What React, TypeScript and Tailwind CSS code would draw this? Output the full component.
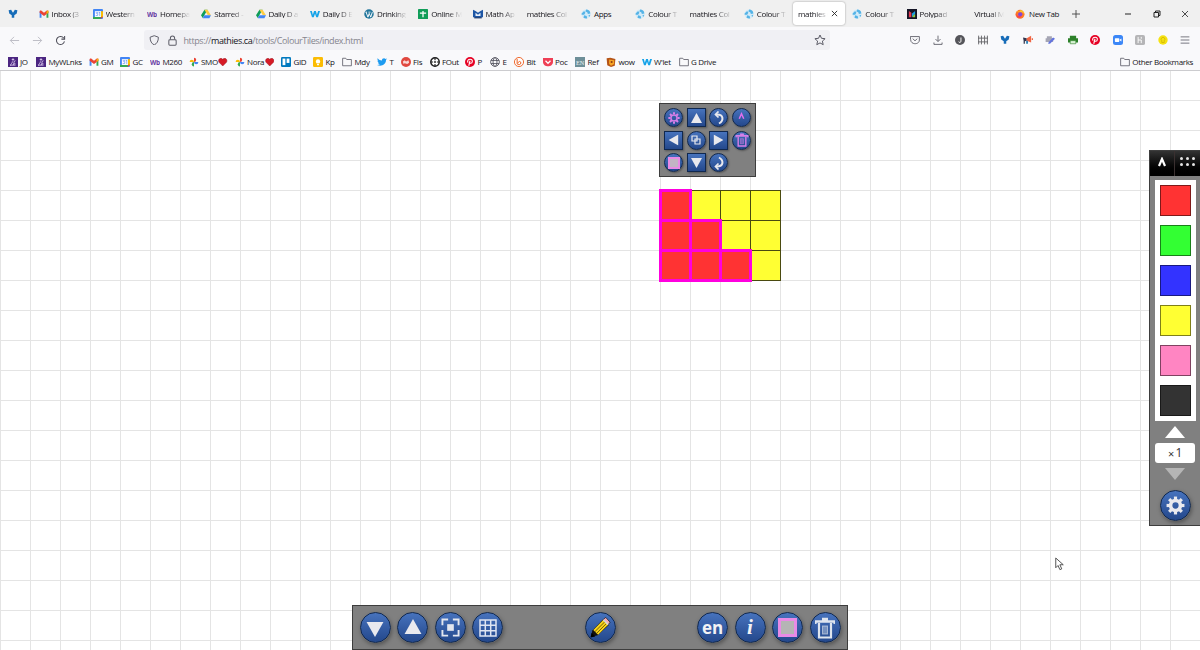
import type { ReactNode } from "react";
import clsx from "clsx";

type IconName = keyof typeof ICONS;

const GLOBE = (
  <>
    <circle cx="8" cy="8" r="7.300" fill="#d3ebf8" />
    <path d="M8 1a7 7 0 0 1 7 6l-4 1-1-3-3-1zM1 7l4-4 2 3-2 3H1zM4 14l1-4 4 1 1 4a7 7 0 0 1-6-1zM12 10l3-1-2 4z" fill="#55b3e6" />
  </>
);

const ICONS = {
  molar: <path d="M1 2 L5 1 L8 6 L11 1 L15 2 L14 7 L10 10 V14 H6 V10 L2 7Z" fill="#176cb8" />,
  gmail: (
    <>
      <path d="M1 4v10h3V7z" fill="#4285f4" />
      <path d="M15 4v10h-3V7z" fill="#34a853" />
      <path d="M1 3l2-1 5 4 5-4 2 1v3l-7 5-7-5z" fill="#ea4335" />
      <path d="M12 4l3-2v4l-3 2z" fill="#fbbc04" />
    </>
  ),
  calendar: (
    <>
      <rect x="0" y="0" width="16" height="16" rx="1.500" fill="#4285f4" />
      <path d="M12.500 3.500H16V13h-3.500z" fill="#fbbc04" />
      <path d="M0 12.500h12.500V16H0z" fill="#34a853" />
      <path d="M12.500 12.500H16L12.500 16z" fill="#ea4335" />
      <rect x="3" y="3.500" width="9.800" height="9.200" fill="#fff" />
      <text x="8" y="11" fontSize="8" fontFamily="Open Sans, sans-serif" fontWeight="600" textAnchor="middle" fill="#4285f4">31</text>
    </>
  ),
  western: (
    <text x="8" y="12" fontSize="11" fontFamily="Open Sans, sans-serif" fontWeight="700" textAnchor="middle" fill="#6a3fa5" textLength="16" lengthAdjust="spacingAndGlyphs">Wb</text>
  ),
  drive: (
    <>
      <path d="M5.500 1h5L5.300 10 2.800 14.500 0 10z" fill="#0f9d58" />
      <path d="M5.500 1h5L16 10h-5z" fill="#ffcd40" />
      <path d="M5.300 10H16l-2.600 4.700H2.800z" fill="#4285f4" />
    </>
  ),
  wallet: <path d="M0 3h3l1.500 6L6.500 3h3l1.500 6L13 3h3l-3.200 10H10L8 7.500 6 13H3.200z" fill="#16a3e8" />,
  wordpress: (
    <>
      <circle cx="8" cy="8" r="7.600" fill="#21759b" />
      <path d="M2.500 5h2.500M7 5h3.500" stroke="#fff" strokeWidth="1.300" />
      <path d="M3.300 5l3 8 2-6 2.500 6 2.500-8" fill="none" stroke="#fff" strokeWidth="1.500" />
    </>
  ),
  sheets: (
    <>
      <rect width="16" height="16" rx="1" fill="#109d58" />
      <path d="M8 3v10M3 6.500h10" stroke="#fff" strokeWidth="2" />
    </>
  ),
  mathapp: (
    <>
      <path d="M0 1l4 2 4 3 4-3 4-2v12H0z" fill="#1d56a5" />
      <path d="M4 6l4 3 4-3v5H4z" fill="#e5eefa" />
      <path d="M2 13h12v2H2z" fill="#12356e" />
    </>
  ),
  globe: GLOBE,
  polypad: (
    <>
      <rect width="16" height="16" fill="#151525" />
      <path d="M3 3l4 3v7H3z" fill="#e33b54" />
      <path d="M8 7l5-4v5l-5 5z" fill="#1d9fe0" />
      <path d="M9 11l4-3v5H9z" fill="#8fca40" />
    </>
  ),
  firefox: (
    <>
      <circle cx="8" cy="8.500" r="7.200" fill="#ff7a25" />
      <path d="M2 3l3 2 3-1 1-3c3 1 6 4 6 7-2-2-3-3-5-3z" fill="#ffc72c" />
      <circle cx="8.300" cy="8.500" r="3.400" fill="#8048d8" />
      <path d="M1.500 6c1 5 4 7 9 5-2 5-9 4-9-5z" fill="#f7375c" />
    </>
  ),
  crest: (
    <>
      <rect width="16" height="16" fill="#4b2581" />
      <path d="M8 2v4M6 4h4M4 14c0-4 3-3 3-7M12 6c-4 0-1 4-4 7M4 13h8M9 11h3" stroke="#e3d5f4" strokeWidth="1.300" fill="none" />
    </>
  ),
  pinwheel: (
    <>
      <path d="M8 8V1a3.500 3.500 0 0 1 0 7z" fill="#ea4335" />
      <path d="M8 8h7a3.500 3.500 0 0 1-7 0z" fill="#4285f4" />
      <path d="M8 8v7a3.500 3.500 0 0 1 0-7z" fill="#34a853" />
      <path d="M8 8H1a3.500 3.500 0 0 1 7 0z" fill="#fbbc04" />
    </>
  ),
  trello: (
    <>
      <rect width="16" height="16" rx="2" fill="#0079bf" />
      <rect x="2.500" y="2.500" width="4.500" height="10.500" fill="#fff" />
      <rect x="9" y="2.500" width="4.500" height="7" fill="#fff" />
    </>
  ),
  keep: (
    <>
      <rect width="16" height="16" rx="2" fill="#fbbc04" />
      <circle cx="8" cy="7" r="3.500" fill="#fff" />
      <path d="M6.500 11h3v2h-3z" fill="#fff" />
    </>
  ),
  folder: <path d="M1 14V2h5l1.500 2H15v10z" fill="none" stroke="#5b5b66" strokeWidth="1.300" strokeLinejoin="round" />,
  twitter: <path d="M1 2c2 2.500 4 3.500 7 3.700C7.500 2 12 .8 13.500 3L16 2.300l-1.600 2.500C14.500 12 7 16 0 12.700c2 0 3.500-.4 4.600-1.300C3 11 2 10 1.500 9H3C1.500 8 .7 6.700.7 5.500l1.300.4C.7 4.700.4 3.300 1 2z" fill="#1d9bf0" />,
  flipgrid: (
    <>
      <circle cx="8" cy="8" r="8" fill="#e0483f" />
      <path d="M3 7l3-2 2 2 4-2 1 4-3 2-4-1-2 1z" fill="#f9d7d4" />
    </>
  ),
  wheel: (
    <>
      <circle cx="8" cy="8" r="6.700" fill="#fff" stroke="#222" strokeWidth="2.400" />
      <path d="M8 1v4M8 11v4M1 8h4M11 8h4" stroke="#222" strokeWidth="1.800" />
      <circle cx="8" cy="8" r="1.500" fill="#222" />
    </>
  ),
  pinterest: (
    <>
      <circle cx="8" cy="8" r="8" fill="#e60023" />
      <path d="M6 14l2-8M5 9C3 6 5 3.500 8.300 3.500c5 0 4 6.500.7 6.500-1 0-1.500-.5-1.700-1" stroke="#fff" strokeWidth="1.700" fill="none" />
    </>
  ),
  web: (
    <g fill="none" stroke="#4a4a55" strokeWidth="1.300">
      <circle cx="8" cy="8" r="7" />
      <ellipse cx="8" cy="8" rx="3.200" ry="7" />
      <path d="M1.500 5.500h13M1.500 10.500h13" />
    </g>
  ),
  bitly: (
    <>
      <circle cx="8" cy="8" r="7.300" fill="#fff" stroke="#ee6123" strokeWidth="1.500" />
      <path d="M5 3v8c2 2 6 1.500 6-1.500S7 6 6.500 10" stroke="#ee6123" strokeWidth="1.600" fill="none" />
    </>
  ),
  pocketRed: (
    <>
      <path d="M0 1.500h16V8c0 9-16 9-16 0z" fill="#ef4056" />
      <path d="M4 6l4 4 4-4" stroke="#fff" strokeWidth="2" fill="none" />
    </>
  ),
  ref: (
    <>
      <rect width="16" height="16" fill="#6e8f98" />
      <text x="8" y="12" fontSize="10" fontFamily="Liberation Serif, serif" textAnchor="middle" fill="#e9f2f4">EN</text>
    </>
  ),
  wow: (
    <>
      <path d="M1 2l6-1 8 2-1 11-6 2-6-3z" fill="#b55316" />
      <path d="M5 4l8 1v6l-5 3-3-3z" fill="#f6a524" />
      <circle cx="9" cy="8" r="1.700" fill="#8f3a10" />
    </>
  ),
  pocket: (
    <g fill="none" stroke="#5b5b66" strokeWidth="1.400" strokeLinecap="round">
      <path d="M1 2.500h14V8c0 8-14 8-14 0z" strokeLinejoin="round" />
      <path d="M4.800 6.300L8 9.300l3.200-3" />
    </g>
  ),
  download: <path d="M8 1v9M4 6.500L8 10.500l4-4M1.500 12v3h13v-3" fill="none" stroke="#5b5b66" strokeWidth="1.400" />,
  avatar: (
    <>
      <circle cx="8" cy="8" r="8" fill="#55555a" />
      <path d="M9.500 4v6c0 2.500-3.500 2.500-3.500.5" stroke="#fff" strokeWidth="1.500" fill="none" />
    </>
  ),
  fence: <path d="M1 1v14M5.500 1v14M10.500 1v14M15 1v14M0 5h16M0 11h16" stroke="#66666b" strokeWidth="1.500" />,
  horn: (
    <>
      <path d="M0 4l6 1v4l-3 1v4H1V9z" fill="#33364d" />
      <path d="M6 5l7-4v11L6 9zM14 5h2v3h-2z" fill="#f06543" />
      <path d="M5 9h3v5H5z" fill="#3182b5" />
    </>
  ),
  printPen: (
    <>
      <path d="M3 2h8v3H3zM1 5h12v6H1z" fill="#a5a5b4" />
      <path d="M5 14l1-3 7-7 3 2-8 8z" fill="#6374df" />
    </>
  ),
  printer: (
    <>
      <path d="M3 1h10v4H3zM0 5h16v7H0z" fill="#2d812a" />
      <path d="M3.500 9h9v5h-9z" fill="#d9f2d5" stroke="#2d812a" />
    </>
  ),
  zoom: (
    <>
      <rect width="16" height="16" rx="4" fill="#3c87f7" />
      <rect x="3" y="5" width="7" height="6" rx="1" fill="#fff" />
      <path d="M10.500 7.500L13.500 5.500v5l-3-2z" fill="#fff" />
    </>
  ),
  grayBadge: (
    <>
      <rect width="16" height="16" rx="3" fill="#b5b5b7" />
      <path d="M5 3v10M5 8h5v5M10 3v3" stroke="#fff" strokeWidth="1.500" fill="none" />
    </>
  ),
  bulb: (
    <>
      <circle cx="8" cy="8" r="7.500" fill="#f5e211" />
      <path d="M6 9a3 3 0 1 1 4 0v3H6z" fill="none" stroke="#c9a800" />
    </>
  ),
  menu: <path d="M1 3h14M1 8h14M1 13h14" stroke="#5b5b66" strokeWidth="1.300" />,
};

function Icon({ name, className = "size-[10px]" }: { name: IconName; className?: string }) {
  return (
    <svg viewBox="0 0 16 16" className={clsx("shrink-0", className)}>
      {ICONS[name]}
    </svg>
  );
}

const TABS: { label: string; icon?: IconName; blank?: boolean; active?: boolean }[] = [
  { label: "Inbox (3", icon: "gmail" },
  { label: "Western", icon: "calendar" },
  { label: "Homepa", icon: "western" },
  { label: "Starred -", icon: "drive" },
  { label: "Daily D a", icon: "drive" },
  { label: "Daily D E", icon: "wallet" },
  { label: "Drinking", icon: "wordpress" },
  { label: "Online M", icon: "sheets" },
  { label: "Math Ap", icon: "mathapp" },
  { label: "mathies Col" },
  { label: "Apps", icon: "globe" },
  { label: "Colour T", icon: "globe" },
  { label: "mathies Col" },
  { label: "Colour T", icon: "globe" },
  { label: "mathies C", active: true },
  { label: "Colour T", icon: "globe" },
  { label: "Polypad", icon: "polypad" },
  { label: "Virtual M", blank: true },
];

const BOOKMARKS: { label: string; icon: IconName; width: string; heart?: boolean }[] = [
  { label: "JO", icon: "crest", width: "w-[28.5px]" },
  { label: "MyWLnks", icon: "crest", width: "w-[52.5px]" },
  { label: "GM", icon: "gmail", width: "w-[31.5px]" },
  { label: "GC", icon: "calendar", width: "w-[30px]" },
  { label: "M260", icon: "western", width: "w-[38.5px]" },
  { label: "SMO", icon: "pinwheel", width: "w-[46px]", heart: true },
  { label: "Nora", icon: "pinwheel", width: "w-[46.5px]", heart: true },
  { label: "GID", icon: "trello", width: "w-[32px]" },
  { label: "Kp", icon: "keep", width: "w-[29px]" },
  { label: "Mdy", icon: "folder", width: "w-[35px]" },
  { label: "T", icon: "twitter", width: "w-[23.5px]" },
  { label: "FIs", icon: "flipgrid", width: "w-[29px]" },
  { label: "FOut", icon: "wheel", width: "w-[35.5px]" },
  { label: "P", icon: "pinterest", width: "w-[25px]" },
  { label: "E", icon: "web", width: "w-[24px]" },
  { label: "Bit", icon: "bitly", width: "w-[28.5px]" },
  { label: "Poc", icon: "pocketRed", width: "w-[32.5px]" },
  { label: "Ref", icon: "ref", width: "w-[31px]" },
  { label: "wow", icon: "wow", width: "w-[35.5px]" },
  { label: "W'let", icon: "wallet", width: "w-[37px]" },
  { label: "G Drive", icon: "folder", width: "w-[50px]" },
];

const EXTENSIONS: IconName[] = [
  "pocket", "download", "avatar", "fence", "molar", "horn", "printPen",
  "printer", "pinterest", "zoom", "grayBadge", "bulb", "menu",
];

function TabStrip() {
  return (
    <div className="flex h-[27px] items-center bg-[#f0f0f0]">
      <div className="flex w-[32.5px] shrink-0 pl-[7.5px]">
        <Icon name="molar" />
      </div>
      {TABS.map((t, i) => (
        <div
          key={i}
          className={clsx(
            "flex h-[23px] shrink-0 items-center gap-[3px]",
            t.active
              ? "mx-px w-[52.25px] rounded-[3px] bg-white pl-[5px] pr-[7px] shadow-[0_0_2px_rgba(0,0,0,0.4)]"
              : "w-[54.25px] pl-[6px] pr-[5px]",
          )}
        >
          {t.icon && <Icon name={t.icon} />}
          {t.blank && <span className="w-[10.5px] shrink-0" />}
          <span
            className={clsx(
              "min-w-0 flex-1 whitespace-nowrap",
              t.label !== "Apps" && "mask-r-from-55% mask-r-to-100%",
            )}
          >
            {t.label}
          </span>
          {t.active && (
            <svg viewBox="0 0 8 8" className="size-[7px] shrink-0" stroke="#222" fill="none">
              <path d="M1 1l6 6M7 1L1 7" />
            </svg>
          )}
        </div>
      ))}
      <div className="flex w-[61px] shrink-0 items-center gap-[4px] pl-[6px]">
        <Icon name="firefox" />
        <span className="whitespace-nowrap">New Tab</span>
      </div>
      <svg viewBox="0 0 10 10" className="ml-px size-[10px] shrink-0" stroke="#444" strokeWidth="0.9">
        <path d="M1 5h8M5 1v8" />
      </svg>
      <div className="ml-auto flex shrink-0 items-center gap-[20.5px] pr-[11px]">
        <svg viewBox="0 0 8 8" className="size-[8px]" stroke="#222">
          <path d="M1 4h6" />
        </svg>
        <svg viewBox="0 0 8 8" className="size-[8px]" fill="none" stroke="#222">
          <path d="M1 2.500h4.500v4.500H1zM2.500 2.500V1H7v4.500H5.500" />
        </svg>
        <svg viewBox="0 0 8 8" className="size-[8px]" stroke="#222" strokeWidth="0.800">
          <path d="M1 1l6 6M7 1L1 7" />
        </svg>
      </div>
    </div>
  );
}

function AddressBar() {
  return (
    <div className="flex h-[26px] items-center">
      <div className="flex w-[144px] shrink-0 items-center gap-[12px] pl-[9px]">
        <svg viewBox="0 0 12 12" className="size-[11px]" fill="none" stroke="#b9b9c2">
          <path d="M1.500 6h9.500M5.500 2L1.500 6l4 4" />
        </svg>
        <svg viewBox="0 0 12 12" className="size-[11px]" fill="none" stroke="#b9b9c2">
          <path d="M1 6h9.500M6.500 2l4 4-4 4" />
        </svg>
        <svg viewBox="0 0 12 12" className="size-[11px]" fill="none" stroke="#4a4a55" strokeWidth="1.100">
          <path d="M10.300 7A4.400 4.400 0 1 1 9.500 3.300M10.500 1v3.500H7" />
        </svg>
      </div>
      <div className="flex h-[20px] w-[686px] shrink-0 items-center rounded-[3px] bg-[#f0f0f4] pl-[5px] pr-[4px]">
        <svg viewBox="0 0 12 12" className="size-[10.5px]" fill="none" stroke="#5b5b66" strokeWidth="1.100">
          <path d="M6 .8l4.700 1.700C10.800 7 9 10 6 11.300 3 10 1.200 7 1.300 2.500z" />
        </svg>
        <svg viewBox="0 0 12 12" className="ml-[7px] size-[11px]" fill="none" stroke="#5b5b66" strokeWidth="1.100">
          <rect x="2" y="5.200" width="8" height="6" rx="1" />
          <path d="M3.700 5V3.300a2.300 2.300 0 0 1 4.600 0V5" />
        </svg>
        <span className="ml-[6px] text-[9px] tracking-[-0.4px] text-[#85858e]">
          https://<span className="text-[#15141a]">mathies.ca</span>/tools/ColourTiles/index.html
        </span>
        <svg viewBox="0 0 12 12" className="ml-auto size-[12px]" fill="none" stroke="#5b5b66">
          <path d="M6 1l1.500 3.300 3.600.4-2.700 2.400.8 3.600L6 8.900l-3.200 1.800.8-3.600L.9 4.700l3.600-.4z" strokeLinejoin="round" />
        </svg>
      </div>
      <div className="ml-auto flex shrink-0 items-center gap-[12.5px] pr-[10px]">
        {EXTENSIONS.map((name) => (
          <Icon key={name} name={name} />
        ))}
      </div>
    </div>
  );
}

function BookmarksBar() {
  return (
    <div className="flex h-[17px] items-center pl-[7.5px]">
      {BOOKMARKS.map((b) => (
        <div key={b.label} className={clsx("flex shrink-0 items-center gap-[2.5px] whitespace-nowrap", b.width)}>
          <Icon name={b.icon} />
          <span>{b.label}</span>
          {b.heart && (
            <svg viewBox="0 0 10 9" className="-ml-[2px] h-[8px] w-[9.5px] shrink-0">
              <path d="M5 9L.8 4.800C-1 2 2.500-1.500 5 1.500 7.500-1.500 11 2 9.200 4.800z" fill="#d61a25" stroke="#8d1018" strokeWidth="0.500" />
            </svg>
          )}
        </div>
      ))}
      <div className="ml-auto flex shrink-0 items-center gap-[2px] pr-[7px]">
        <Icon name="folder" />
        <span className="whitespace-nowrap">Other Bookmarks</span>
      </div>
    </div>
  );
}

const BTN = "flex shrink-0 items-center justify-center border border-[#10284f] bg-linear-to-b from-[#4773bd] to-[#24488c]";

function RoundButton({ children }: { children: ReactNode }) {
  return (
    <div className={clsx(BTN, "size-[31px] rounded-full shadow-[1px_2px_4px_rgba(0,0,0,0.35)]")}>
      {children}
    </div>
  );
}

function MiniButton({ square, children }: { square?: boolean; children: ReactNode }) {
  return (
    <div className={clsx(BTN, "size-[19px] shadow-[1px_1px_2px_rgba(0,0,0,0.35)]", !square && "rounded-full")}>
      {children}
    </div>
  );
}

function Triangle({ className }: { className?: string }) {
  return (
    <svg viewBox="0 0 18 16" className={className}>
      <path d="M9 0l9 16H0z" fill="#e9e9ee" />
    </svg>
  );
}

function Gear({ className, ring = 4.5 }: { className?: string; ring?: number }) {
  return (
    <svg viewBox="-12 -12 24 24" className={className} fill="none" stroke="currentColor">
      <circle r="6.200" strokeWidth={ring} />
      {[0, 45, 90, 135, 180, 225, 270, 315].map((a) => (
        <path key={a} d="M0-7.300V-11.300" strokeWidth="4" transform={`rotate(${a})`} />
      ))}
    </svg>
  );
}

function Trash({ className }: { className?: string }) {
  return (
    <svg viewBox="0 0 22 22" className={className} fill="none" stroke="currentColor">
      <path d="M1 4.500h20M8 2h6" strokeWidth="2.400" />
      <path d="M1.800 4v3M20.200 4v3" strokeWidth="1.500" />
      <path d="M5 6v14.500h12V6" strokeWidth="2.200" />
      <rect x="8.500" y="9" width="5" height="8" fill="currentColor" fillOpacity="0.400" strokeOpacity="0.600" />
    </svg>
  );
}

function SelectionPad() {
  return (
    <div className="absolute left-[659px] top-[32px] grid h-[74px] w-[97px] grid-cols-[repeat(4,22.7px)] grid-rows-[repeat(3,22.7px)] border border-[#3d3d3d] bg-[#808080] pl-[4px] pt-[4px]">
      <MiniButton><Gear ring={3} className="size-[12px] text-[#d77fe8]" /></MiniButton>
      <MiniButton square><Triangle className="h-[10px] w-[11px]" /></MiniButton>
      <MiniButton>
        <svg viewBox="0 0 14 14" className="size-[14px]" fill="none" stroke="#e9e9ee" strokeWidth="2">
          <path d="M4 3.500c8-.5 8 6 3 9" />
          <path d="M6.500 .5L3.500 3.500l3 3" strokeWidth="1.700" />
        </svg>
      </MiniButton>
      <MiniButton>
        <svg viewBox="0 0 10 10" className="mb-[2px] size-[9px]" fill="none" stroke="#e070ec" strokeWidth="1.700">
          <path d="M2.500 7.500L5 2l2.500 5.500" />
        </svg>
      </MiniButton>
      <MiniButton square><Triangle className="h-[10px] w-[11px] -rotate-90" /></MiniButton>
      <MiniButton>
        <svg viewBox="0 0 10 10" className="size-[10px]" fill="none" stroke="#e9e9ee" strokeWidth="1.200">
          <path d="M1 1h5v5H1zM4 4h5v5H4z" />
        </svg>
      </MiniButton>
      <MiniButton square><Triangle className="h-[10px] w-[11px] rotate-90" /></MiniButton>
      <MiniButton><Trash className="size-[14px] text-[#d77fe8]" /></MiniButton>
      <MiniButton><div className="size-[12px] border-2 border-[#e88be6] bg-[#c2b5c4]" /></MiniButton>
      <MiniButton square><Triangle className="h-[10px] w-[11px] rotate-180" /></MiniButton>
      <MiniButton>
        <svg viewBox="0 0 14 14" className="size-[14px]" fill="none" stroke="#e9e9ee" strokeWidth="2">
          <path d="M7 1.500c5 3 5 9.500-3 9" />
          <path d="M6.500 7.500l-3 3 3 3" strokeWidth="1.700" />
        </svg>
      </MiniButton>
    </div>
  );
}

const TILES = ["RYYY", "RRYY", "RRRY"];

function TileBoard() {
  return (
    <div className="absolute left-[660px] top-[119px] grid grid-cols-[repeat(4,30px)] grid-rows-[repeat(3,30px)] border-l border-t border-[#4a4a10]">
      {TILES.join("").split("").map((c, i) => (
        <div
          key={i}
          className={clsx(
            "relative border-b border-r border-[#4a4a10]",
            c === "R" ? "bg-[#ff3333]" : "bg-[#ffff33]",
          )}
        >
          {c === "R" && <div className="absolute -inset-[2px] z-10 border-[3px] border-[#ff00df]" />}
        </div>
      ))}
    </div>
  );
}

const COLOURS = ["bg-[#ff3333]", "bg-[#33ff33]", "bg-[#3333ff]", "bg-[#ffff33]", "bg-[#ff85c2]", "bg-[#333333]"];

function ColourPalette() {
  return (
    <div className="absolute right-0 top-[79px] flex h-[376px] w-[51px] flex-col items-center border border-r-0 border-[#3d3d3d] bg-[#808080]">
      <div className="flex h-[25px] w-full shrink-0 bg-linear-to-b from-[#333] to-black">
        <div className="flex w-[25px] items-center justify-center border-r border-[#3a3030]">
          <svg viewBox="0 0 10 10" className="mb-[4px] size-[10px]" fill="none" stroke="#fff" strokeWidth="2.200">
            <path d="M2 9L5 2l3 7" />
          </svg>
        </div>
        <div className="grid flex-1 grid-cols-[repeat(3,3px)] content-center justify-center gap-[3px] pb-[5px]">
          {[0, 1, 2, 3, 4, 5].map((d) => (
            <span key={d} className="size-[3px] rounded-full bg-[#e4e4e4]" />
          ))}
        </div>
      </div>
      <div className="mt-[4px] flex h-[241px] w-[41px] shrink-0 flex-col items-center gap-[9px] bg-white pt-[5px]">
        {COLOURS.map((c) => (
          <div key={c} className={clsx("size-[31px] shrink-0 border border-black/50", c)} />
        ))}
      </div>
      <svg viewBox="0 0 20 12" className="mt-[5px] h-[12px] w-[20px] shrink-0">
        <path d="M10 0l10 12H0z" fill="#fff" />
      </svg>
      <div className="mt-[5px] flex h-[20px] w-[40px] shrink-0 items-center justify-center gap-[1.5px] rounded-[3px] bg-white text-[12px] text-[#333]">
        <span className="text-[11px]">×</span>
        <span>1</span>
      </div>
      <svg viewBox="0 0 20 12" className="mt-[5px] h-[12px] w-[20px] shrink-0">
        <path d="M10 12L20 0H0z" fill="#b5b5b5" />
      </svg>
      <div className="mt-[10px]">
        <RoundButton><Gear className="size-[19px] text-[#e9e9ee]" /></RoundButton>
      </div>
    </div>
  );
}

function BottomBar() {
  return (
    <div className="absolute bottom-0 left-[352px] flex h-[45px] w-[496px] items-center border border-[#3d3d3d] bg-[#808080] px-[6.5px]">
      <div className="flex gap-[6.5px]">
        <RoundButton><Triangle className="mt-[3px] h-[15px] w-[18px] rotate-180" /></RoundButton>
        <RoundButton><Triangle className="mb-[3px] h-[15px] w-[18px]" /></RoundButton>
        <RoundButton>
          <svg viewBox="0 0 20 20" className="size-[19px]" fill="none" stroke="#e3e6ee" strokeWidth="2">
            <path d="M1.500 7.500v-6h6M12.500 1.500h6v6M18.500 12.500v6h-6M7.500 18.500h-6v-6" />
            <rect x="6.500" y="6.500" width="7" height="7" fill="#e3e6ee" stroke="none" />
          </svg>
        </RoundButton>
        <RoundButton>
          <svg viewBox="0 0 18 18" className="size-[18px]" fill="none" stroke="#dfe5f2" strokeWidth="1.500">
            <path d="M1 1h16v16H1zM6.300 1v16M11.700 1v16M1 6.300h16M1 11.700h16" />
          </svg>
        </RoundButton>
      </div>
      <div className="ml-[81.5px]">
        <RoundButton>
          <svg viewBox="0 0 24 24" className="size-[23px] shrink-0">
            <path d="M2 22l1.500-7L15 3l6 6L9 20z" fill="#111" />
            <path d="M4.500 14.500L15 4l5 5L9.500 19.500z" fill="#f8d51c" />
            <path d="M6.300 16.200L16.500 6M8 18L18.500 7.500" stroke="#6e5600" />
            <path d="M15 3.500L17.500 1.500 22 6.500l-2 2.500z" fill="#f5abb1" stroke="#111" strokeWidth="0.700" />
            <path d="M15 4l5 5" stroke="#ddd" strokeWidth="1.500" />
            <path d="M1.500 22.500l1.200-5 3.800 3.800z" fill="#000" />
          </svg>
        </RoundButton>
      </div>
      <div className="ml-auto flex gap-[6.5px]">
        <RoundButton><span className="mb-px font-['Open_Sans',sans-serif] text-[17px] font-bold tracking-normal text-[#f2f2f5]">en</span></RoundButton>
        <RoundButton><span className="font-['Liberation_Serif',serif] text-[21px] font-bold italic tracking-normal text-[#f2f2f5]">i</span></RoundButton>
        <RoundButton><div className="size-[19px] shrink-0 border-[3px] border-[#e88be6] bg-[#b5b5b5]" /></RoundButton>
        <RoundButton><Trash className="size-[22px] shrink-0 text-[#dfe5ee]" /></RoundButton>
      </div>
    </div>
  );
}

export default function App() {
  return (
    <div className="flex h-[650px] w-[1200px] flex-col overflow-hidden bg-[#f9f9fb] font-['Open_Sans',sans-serif] text-[8px] leading-none tracking-[-0.35px] text-[#15141a] antialiased">
      <TabStrip />
      <AddressBar />
      <BookmarksBar />
      <main className="relative flex-1 border-t border-[#cccccf] bg-white bg-[linear-gradient(to_right,#e4e4e4_1px,transparent_1px),linear-gradient(to_bottom,transparent_29px,#e4e4e4_29px)] bg-[size:30px_30px]">
        <SelectionPad />
        <TileBoard />
        <ColourPalette />
        <BottomBar />
        <svg viewBox="0 0 12 18" className="absolute left-[1055px] top-[486px] h-[14px] w-[9px]">
          <path d="M1 1v13l3-3 2.500 5.500 2.500-1L6.500 10H11z" fill="#fff" stroke="#444" strokeWidth="1.200" />
        </svg>
      </main>
    </div>
  );
}
